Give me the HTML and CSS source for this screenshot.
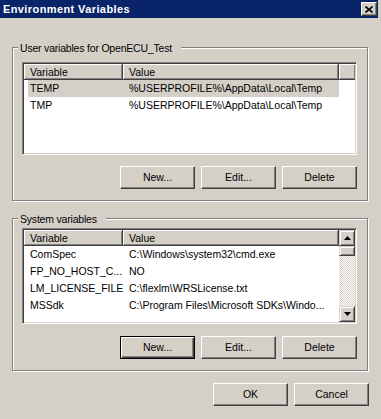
FILE: index.html
```html
<!DOCTYPE html>
<html>
<head>
<meta charset="utf-8">
<title>Environment Variables</title>
<link rel="stylesheet" href="styles.css">
</head>
<body>
<div class="window">
  <div class="titlebar">
    <span class="title">Environment Variables</span>
    <button class="close" aria-label="Close">
      <svg width="8" height="7" viewBox="0 0 8 7"><path d="M0.5 0.5 L7.5 6.5 M7.5 0.5 L0.5 6.5" stroke="#000" stroke-width="1.6" fill="none"/></svg>
    </button>
  </div>
  <div class="content">
    <fieldset class="group user-group">
      <legend>User variables for OpenECU_Test</legend>
      <div class="list user-list">
        <div class="list-main">
          <div class="header">
            <div class="hcell c1">Variable</div>
            <div class="hcell c2">Value</div>
            <div class="hcell filler"></div>
          </div>
          <div class="row selected"><span class="c1">TEMP</span><span class="c2">%USERPROFILE%\AppData\Local\Temp</span></div>
          <div class="row"><span class="c1">TMP</span><span class="c2">%USERPROFILE%\AppData\Local\Temp</span></div>
        </div>
      </div>
      <div class="buttons">
        <button class="btn">New...</button>
        <button class="btn">Edit...</button>
        <button class="btn">Delete</button>
      </div>
    </fieldset>

    <fieldset class="group system-group">
      <legend>System variables</legend>
      <div class="list system-list">
        <div class="list-main">
          <div class="header">
            <div class="hcell c1">Variable</div>
            <div class="hcell c2">Value</div>
          </div>
          <div class="row"><span class="c1">ComSpec</span><span class="c2">C:\Windows\system32\cmd.exe</span></div>
          <div class="row"><span class="c1">FP_NO_HOST_C...</span><span class="c2">NO</span></div>
          <div class="row"><span class="c1">LM_LICENSE_FILE</span><span class="c2">C:\flexlm\WRSLicense.txt</span></div>
          <div class="row"><span class="c1">MSSdk</span><span class="c2">C:\Program Files\Microsoft SDKs\Windo...</span></div>
        </div>
        <div class="scrollbar">
          <div class="sbtn"><svg width="7" height="4" viewBox="0 0 7 4"><path d="M3.5 0 L7 4 L0 4 Z" fill="#000"/></svg></div>
          <div class="thumb"></div>
          <div class="track"></div>
          <div class="sbtn"><svg width="7" height="4" viewBox="0 0 7 4"><path d="M0 0 L7 0 L3.5 4 Z" fill="#000"/></svg></div>
        </div>
      </div>
      <div class="buttons">
        <button class="btn default">New...</button>
        <button class="btn">Edit...</button>
        <button class="btn">Delete</button>
      </div>
    </fieldset>

    <div class="dialog-buttons">
      <button class="btn">OK</button>
      <button class="btn">Cancel</button>
    </div>
  </div>
</div>
</body>
</html>
```

FILE: styles.css
```css
* {
  box-sizing: border-box;
}

html, body {
  margin: 0;
  padding: 0;
}

body {
  width: 381px;
  height: 419px;
  overflow: hidden;
  background: #d4d0c8;
  font-family: "Liberation Sans", Arial, sans-serif;
  font-size: 10.5px;
  line-height: 13px;
  color: #000;
}

.window {
  width: 381px;
  height: 419px;
  display: flex;
  flex-direction: column;
}

.titlebar {
  height: 18px;
  margin-right: 3px;
  padding: 0 1px 0 3px;
  background: #0a246a;
  color: #fff;
  font-size: 11px;
  font-weight: bold;
  letter-spacing: 0.4px;
  display: flex;
  align-items: center;
  justify-content: space-between;
}

.close {
  width: 16px;
  height: 14px;
  padding: 0;
  background: #d4d0c8;
  border: 1px solid;
  border-color: #fff #404040 #404040 #fff;
  box-shadow: inset -1px -1px 0 #808080;
  display: flex;
  align-items: center;
  justify-content: center;
}

.content {
  padding: 21px 12px 0 12px;
  display: flex;
  flex-direction: column;
}

.group {
  margin: 0;
  width: 356px;
  min-width: 0;
  padding: 7px 10px 11px 9px;
  border: 1px solid #808080;
  box-shadow: 1px 1px 0 #fff, inset 1px 1px 0 #fff;
}

.group legend {
  margin-left: -4px;
  padding: 3px 9px 0 2px;
  line-height: 13px;
  font-size: 10.5px;
  letter-spacing: -0.2px;
  background: #d4d0c8;
}

.system-group {
  margin-top: 9px;
  padding-top: 2px;
}

.list {
  width: 335px;
  background: #fff;
  border: 1px solid;
  border-color: #808080 #fff #fff #808080;
  box-shadow: inset 1px 1px 0 #404040, inset -1px -1px 0 #d4d0c8;
  padding: 1px;
  display: flex;
}

.user-list {
  height: 93px;
}

.system-list {
  height: 96px;
}

.list-main {
  flex: 1;
  min-width: 0;
}

.header {
  display: flex;
  height: 16px;
}

.hcell {
  background: #d4d0c8;
  border-right: 1px solid #404040;
  border-bottom: 1px solid #404040;
  box-shadow: inset 1px 1px 0 #fff, inset -1px -1px 0 #808080;
  padding: 1px 0 0 6px;
  line-height: 14px;
  white-space: nowrap;
}

.hcell.c1 {
  width: 99px;
}

.hcell.c2 {
  width: 216px;
}

.hcell.filler {
  flex: 1;
  border-right: 0;
}

.row {
  display: flex;
  width: 311px;
  height: 17px;
  margin-left: 4px;
  line-height: 17px;
  white-space: nowrap;
}

.row.selected {
  background: #d4d0c8;
}

.row .c1 {
  width: 101px;
  padding-left: 2px;
  flex: none;
}

.row .c2 {
  flex: 1;
  overflow: hidden;
}

.scrollbar {
  width: 16px;
  display: flex;
  flex-direction: column;
}

.sbtn,
.thumb {
  background: #d4d0c8;
  border: 1px solid;
  border-color: #d4d0c8 #404040 #404040 #d4d0c8;
  box-shadow: inset 1px 1px 0 #fff, inset -1px -1px 0 #808080;
}

.sbtn {
  height: 16px;
  display: flex;
  align-items: center;
  justify-content: center;
}

.thumb {
  height: 10px;
}

.track {
  flex: 1;
  background-color: #fff;
  background-image: conic-gradient(#d4d0c8 25%, #fff 0 50%, #d4d0c8 0 75%, #fff 0);
  background-size: 2px 2px;
}

.buttons {
  display: flex;
  justify-content: flex-end;
  gap: 6px;
  margin-top: 11px;
}

.system-group .buttons {
  margin-top: 12px;
}

.btn {
  width: 75px;
  height: 23px;
  padding: 0;
  font: inherit;
  color: #000;
  background: #d4d0c8;
  border: 1px solid;
  border-color: #fff #404040 #404040 #fff;
  box-shadow: inset -1px -1px 0 #808080;
}

.btn.default {
  border-color: #000;
  box-shadow: inset 1px 1px 0 #fff, inset -1px -1px 0 #404040, inset -2px -2px 0 #808080;
}

.dialog-buttons {
  display: flex;
  justify-content: flex-end;
  gap: 6px;
  margin-top: 12px;
}
```
